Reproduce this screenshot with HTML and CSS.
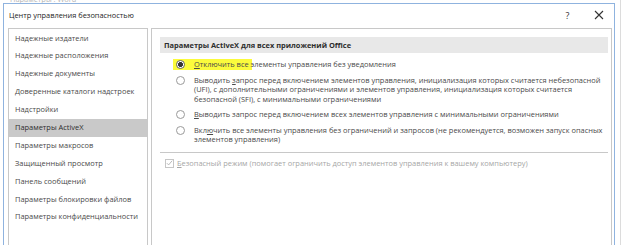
FILE: index.html
```html
<!DOCTYPE html>
<html lang="ru">
<head>
  <meta charset="UTF-8" />
  <title>Центр управления безопасностью</title>
  <link rel="stylesheet" href="styles.css">
</head>
<body>
  <!-- окно Word за диалогом -->
  <div class="behind">
    <span class="behind-title">Параметры : Word</span>
    <span class="behind-edge"></span>
  </div>

  <!-- диалог -->
  <section class="dialog">
    <header class="titlebar">
      <span class="title">Центр управления безопасностью</span>
      <span class="tb-btn">?</span>
      <span class="tb-btn">
        <svg width="10" height="10" viewBox="0 0 10 10"><path d="M1 1L9 9M9 1L1 9" stroke="#333" stroke-width="1.1"/></svg>
      </span>
    </header>

    <div class="content">
      <nav class="nav">
        <div class="nav-item">Надежные издатели</div>
        <div class="nav-item">Надежные расположения</div>
        <div class="nav-item">Надежные документы</div>
        <div class="nav-item">Доверенные каталоги надстроек</div>
        <div class="nav-item">Надстройки</div>
        <div class="nav-item active">Параметры ActiveX</div>
        <div class="nav-item">Параметры макросов</div>
        <div class="nav-item">Защищенный просмотр</div>
        <div class="nav-item">Панель сообщений</div>
        <div class="nav-item">Параметры блокировки файлов</div>
        <div class="nav-item">Параметры конфиденциальности</div>
      </nav>

      <main class="pane">
        <div class="pane-head">Параметры ActiveX для всех приложений Office</div>

        <div class="options">
          <label class="option marked">
            <span class="radio on"></span>
            <span class="opt-text"><u>О</u>тключить все элементы управления без уведомления</span>
          </label>
          <label class="option">
            <span class="radio"></span>
            <span class="opt-text">Выводить <u>з</u>апрос перед включением элементов управления, инициализация которых считается небезопасной<br>(UFI), с дополнительными ограничениями и элементов управления, инициализация которых считается<br>безопасной (SFI), с минимальными ограничениями</span>
          </label>
          <label class="option">
            <span class="radio"></span>
            <span class="opt-text"><u>В</u>ыводить запрос перед включением всех элементов управления с минимальными ограничениями</span>
          </label>
          <label class="option">
            <span class="radio"></span>
            <span class="opt-text">Вкл<u>ю</u>чить все элементы управления без ограничений и запросов (не рекомендуется, возможен запуск опасных<br>элементов управления)</span>
          </label>
        </div>

        <hr class="sep">

        <label class="check">
          <span class="box">
            <svg width="8" height="8" viewBox="0 0 8 8"><path d="M1 4.2L3 6.2L7 1.4" fill="none" stroke="#b0b0b0" stroke-width="1"/></svg>
          </span>
          <span class="check-text"><u>Б</u>езопасный режим (помогает ограничить доступ элементов управления к вашему компьютеру)</span>
        </label>
      </main>
    </div>
  </section>
</body>
</html>
```
FILE: styles.css
```css
/* ─── 0. база ───────────────────────────── */
*,*::before,*::after{box-sizing:border-box;margin:0;padding:0}
html,body{width:100%;height:100%;overflow:hidden;background:#fff}
body{
  position:relative;
  font-family:"Open Sans","Noto Sans",sans-serif;
  font-size:7.45px;color:#3c3c3c;
}

/* ─── 1. окно за диалогом ───────────────── */
.behind-title{
  position:absolute;left:10px;top:-6px;
  color:#b5b5b5;
}
.behind-edge{
  position:absolute;left:620px;top:0;bottom:0;
  border-left:1px solid #dcdcdc;
}

/* ─── 2. диалог ────────────────────────── */
.dialog{
  position:absolute;left:3px;top:3px;width:612px;height:242px;
  background:#fff;border:1px solid #8fb3df;border-bottom:none;
}
.titlebar{
  display:flex;align-items:center;height:24px;
  padding:0 0 2px 5px;color:#1e1e1e;font-size:7.42px;
}
.title{flex:1}
.tb-btn{
  width:31px;display:flex;justify-content:center;align-items:center;
  font-size:9px;color:#333;
}

.content{display:flex;gap:3px;padding:0 2px 0 4px;height:217px}

/* левый список */
.nav{
  width:140px;flex:none;border:1px solid #c8c8c8;border-bottom:none;
  padding-top:0.5px;
}
.nav-item{
  height:17.9px;line-height:17.9px;padding-left:6px;
  color:#4a4a4a;white-space:nowrap;
}
.nav-item.active{background:#c9c9c9;color:#2e2e2e}

/* правая панель */
.pane{
  flex:1;border:1px solid #c8c8c8;border-bottom:none;
  padding:8px 3px 0 8px;
}
.pane-head{
  height:16px;line-height:16px;padding-left:4px;
  background:#e8e8e8;color:#2e2e2e;font-weight:bold;white-space:nowrap;
}

.options{display:flex;flex-direction:column;gap:6px;padding-top:7px}
.option{
  display:flex;align-items:flex-start;gap:9px;padding-left:16px;
  line-height:9.5px;white-space:nowrap;color:#4a4a4a;
}
.marked{position:relative;z-index:0}
.marked::before{
  content:"";position:absolute;z-index:-1;
  left:13px;top:-1px;width:79px;height:11px;background:#fbfb3c;
}
.radio{
  flex:none;width:9px;height:9px;margin-top:0.25px;border-radius:50%;
  border:1px solid #9a9a9a;background:#fff;
}
.radio.on{
  background:radial-gradient(circle,#333 0 2.2px,#fff 2.6px);
  border-color:#666;
}

.sep{border:none;border-top:1px solid #c8c8c8;margin:7px 0 0}

.check{
  display:flex;align-items:center;gap:3px;margin-top:6px;padding-left:5px;
  line-height:9.5px;white-space:nowrap;color:#a6a6a6;
}
.box{
  flex:none;width:9px;height:9px;border:1px solid #c6c6c6;
  display:flex;align-items:center;justify-content:center;
}
```
